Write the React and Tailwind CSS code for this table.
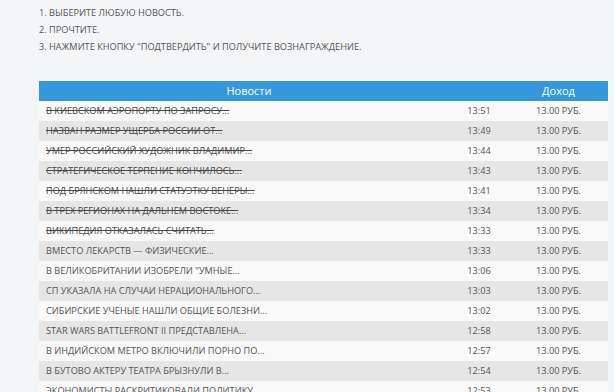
import React from 'react';

const news = [
  { title: 'В КИЕВСКОМ АЭРОПОРТУ ПО ЗАПРОСУ...', time: '13:51', read: true },
  { title: 'НАЗВАН РАЗМЕР УЩЕРБА РОССИИ ОТ...', time: '13:49', read: true },
  { title: 'УМЕР РОССИЙСКИЙ ХУДОЖНИК ВЛАДИМИР...', time: '13:44', read: true },
  { title: 'СТРАТЕГИЧЕСКОЕ ТЕРПЕНИЕ КОНЧИЛОСЬ...', time: '13:43', read: true },
  { title: 'ПОД БРЯНСКОМ НАШЛИ СТАТУЭТКУ ВЕНЕРЫ...', time: '13:41', read: true },
  { title: 'В ТРЕХ РЕГИОНАХ НА ДАЛЬНЕМ ВОСТОКЕ...', time: '13:34', read: true },
  { title: 'ВИКИПЕДИЯ ОТКАЗАЛАСЬ СЧИТАТЬ...', time: '13:33', read: true },
  { title: 'ВМЕСТО ЛЕКАРСТВ — ФИЗИЧЕСКИЕ...', time: '13:33', read: false },
  { title: 'В ВЕЛИКОБРИТАНИИ ИЗОБРЕЛИ "УМНЫЕ...', time: '13:06', read: false },
  { title: 'СП УКАЗАЛА НА СЛУЧАИ НЕРАЦИОНАЛЬНОГО...', time: '13:03', read: false },
  { title: 'СИБИРСКИЕ УЧЕНЫЕ НАШЛИ ОБЩИЕ БОЛЕЗНИ...', time: '13:02', read: false },
  { title: 'STAR WARS BATTLEFRONT II ПРЕДСТАВЛЕНА...', time: '12:58', read: false },
  { title: 'В ИНДИЙСКОМ МЕТРО ВКЛЮЧИЛИ ПОРНО ПО...', time: '12:57', read: false },
  { title: 'В БУТОВО АКТЕРУ ТЕАТРА БРЫЗНУЛИ В...', time: '12:54', read: false },
  { title: 'ЭКОНОМИСТЫ РАСКРИТИКОВАЛИ ПОЛИТИКУ...', time: '12:53', read: false },
];

function App() {
  return (
    <div className="h-[392px] overflow-hidden bg-[#f4f5f7] pl-[39px] pr-[6px] pt-[4px] font-['Open_Sans',sans-serif] text-[#555]">
      {/* Instructions */}
      <div className="text-[9.2px] leading-[17px] uppercase">
        <p>1. Выберите любую новость.</p>
        <p>2. Прочтите.</p>
        <p>3. Нажмите кнопку "подтвердить" и получите вознаграждение.</p>
      </div>

      {/* News table */}
      <div className="mt-[26px]">
        <div className="grid grid-cols-[420px_50px_1fr] h-[20px] items-center bg-[#3598dc] text-white text-[11px]">
          <div className="text-center">Новости</div>
          <div></div>
          <div className="text-center">Доход</div>
        </div>
        {news.map((n, i) => (
          <div
            key={i}
            className={`grid grid-cols-[410px_60px_1fr] h-[20px] items-center text-[9.2px] ${
              i % 2 === 1 ? 'bg-[#e6e6e6]' : 'bg-[#f9f9f9]'
            }`}
          >
            <div className={`pl-[7px] truncate ${n.read ? 'line-through text-[#4a4a4a]' : ''}`}>
              {n.title}
            </div>
            <div className="text-center">{n.time}</div>
            <div className="text-center">13.00 РУБ.</div>
          </div>
        ))}
      </div>
    </div>
  );
}

export default App;
